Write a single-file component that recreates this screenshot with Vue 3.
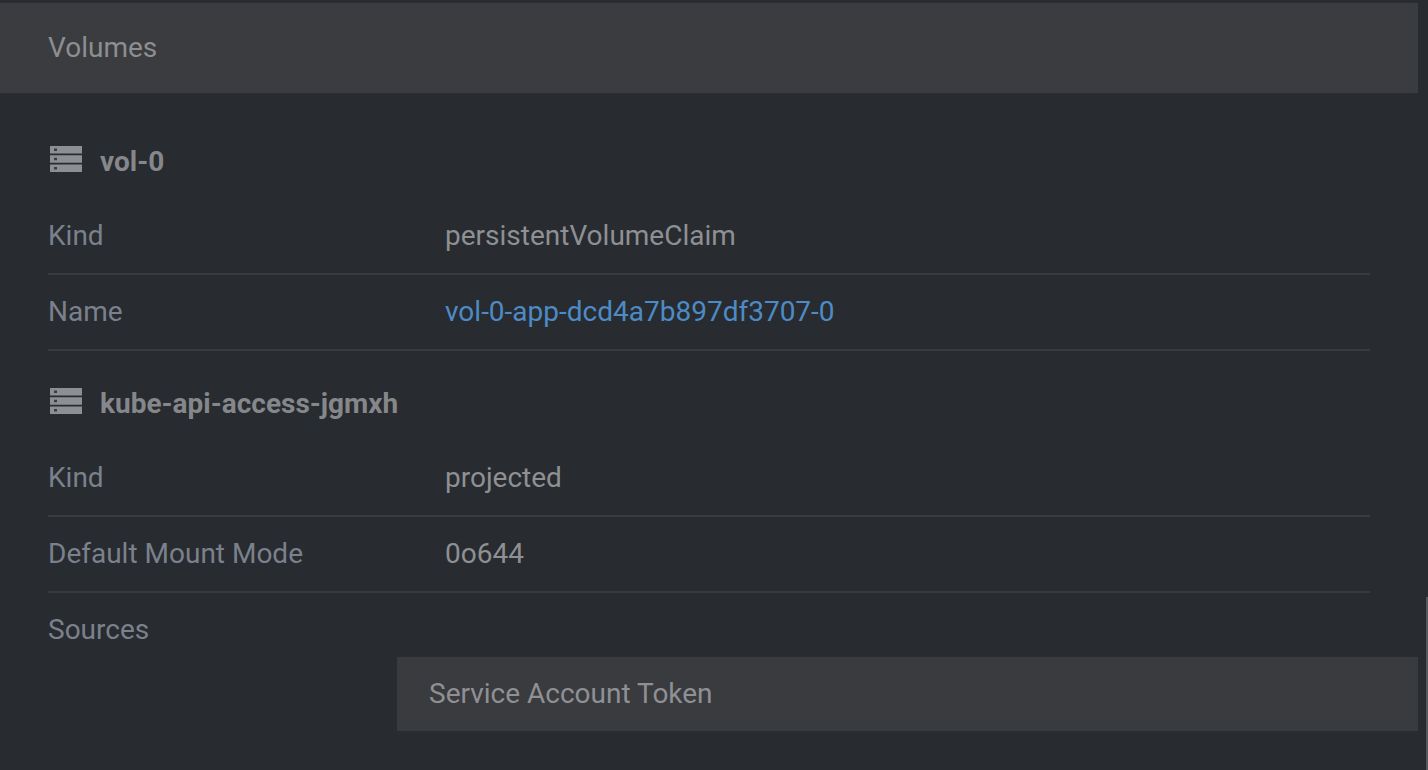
<script setup>
const volumes = [
  {
    name: 'vol-0',
    rows: [
      { label: 'Kind', value: 'persistentVolumeClaim' },
      { label: 'Name', value: 'vol-0-app-dcd4a7b897df3707-0', link: true },
    ],
  },
  {
    name: 'kube-api-access-jgmxh',
    rows: [
      { label: 'Kind', value: 'projected' },
      { label: 'Default Mount Mode', value: '0o644' },
    ],
  },
]
</script>

<template>
  <div class="page">
    <header class="head">Volumes</header>
    <section class="body">
      <div v-for="v in volumes" :key="v.name" class="volume">
        <h3 class="title">
          <svg class="icon" width="32" height="26" viewBox="0 0 32 26">
            <g fill="#8c8f93">
              <rect x="0" y="0" width="32" height="7.5" />
              <rect x="0" y="9.25" width="32" height="7.5" />
              <rect x="0" y="18.5" width="32" height="7.5" />
            </g>
            <g fill="#3a3d41">
              <rect x="4" y="2.5" width="3" height="2.5" />
              <rect x="4" y="11.75" width="3" height="2.5" />
              <rect x="4" y="21" width="3" height="2.5" />
            </g>
          </svg>
          <span>{{ v.name }}</span>
        </h3>
        <div v-for="r in v.rows" :key="r.label" class="row">
          <span class="label">{{ r.label }}</span>
          <a v-if="r.link" class="value link">{{ r.value }}</a>
          <span v-else class="value">{{ r.value }}</span>
        </div>
      </div>
      <div class="sources">
        <div class="label">Sources</div>
        <div class="subhead">Service Account Token</div>
      </div>
    </section>
    <div class="scrollbar"></div>
  </div>
</template>

<style>
html, body { margin: 0; background: #282b2f; overflow: hidden; }
</style>

<style scoped>
.page {
  position: relative;
  height: 770px;
  overflow: hidden;
  padding-top: 3px;
  box-sizing: border-box;
  background: #282b2f;
  font-family: Roboto, "Liberation Sans", sans-serif;
  font-size: 28px;
  color: #8e9094;
}
.head {
  width: 1418px;
  height: 90px;
  line-height: 90px;
  box-sizing: border-box;
  padding-left: 48px;
  background: #3a3c40;
  color: #8c8e91;
}
.body {
  padding: 36px 58px 0 48px;
}
.title {
  display: flex;
  align-items: center;
  gap: 18px;
  height: 64px;
  margin: 0 0 5px;
  font-size: 28px;
  font-weight: 700;
  color: #85878b;
}
.volume + .volume .title { margin-top: 20px; }
.icon { margin: 0 0 4px 2px; flex: none; }
.row {
  display: flex;
  align-items: center;
  height: 76px;
  padding-bottom: 1px;
  box-sizing: border-box;
  border-bottom: 2px solid #393b3f;
}
.title + .row { height: 77px; padding-bottom: 0; }
.label {
  width: 397px;
  flex: none;
  color: #7b818c;
}
.value { color: #8e9094; }
.link { color: #4d8bc6; }
.sources { height: 140px; }
.sources .label {
  width: auto;
  height: 64px;
  line-height: 74px;
}
.subhead {
  margin: 0 -48px 0 349px;
  height: 74px;
  line-height: 73px;
  padding-left: 32px;
  background: #3a3b3f;
  color: #8f9093;
}
.scrollbar {
  position: absolute;
  right: 0;
  top: 597px;
  bottom: 0;
  width: 2px;
  background: #55585c;
}
</style>
